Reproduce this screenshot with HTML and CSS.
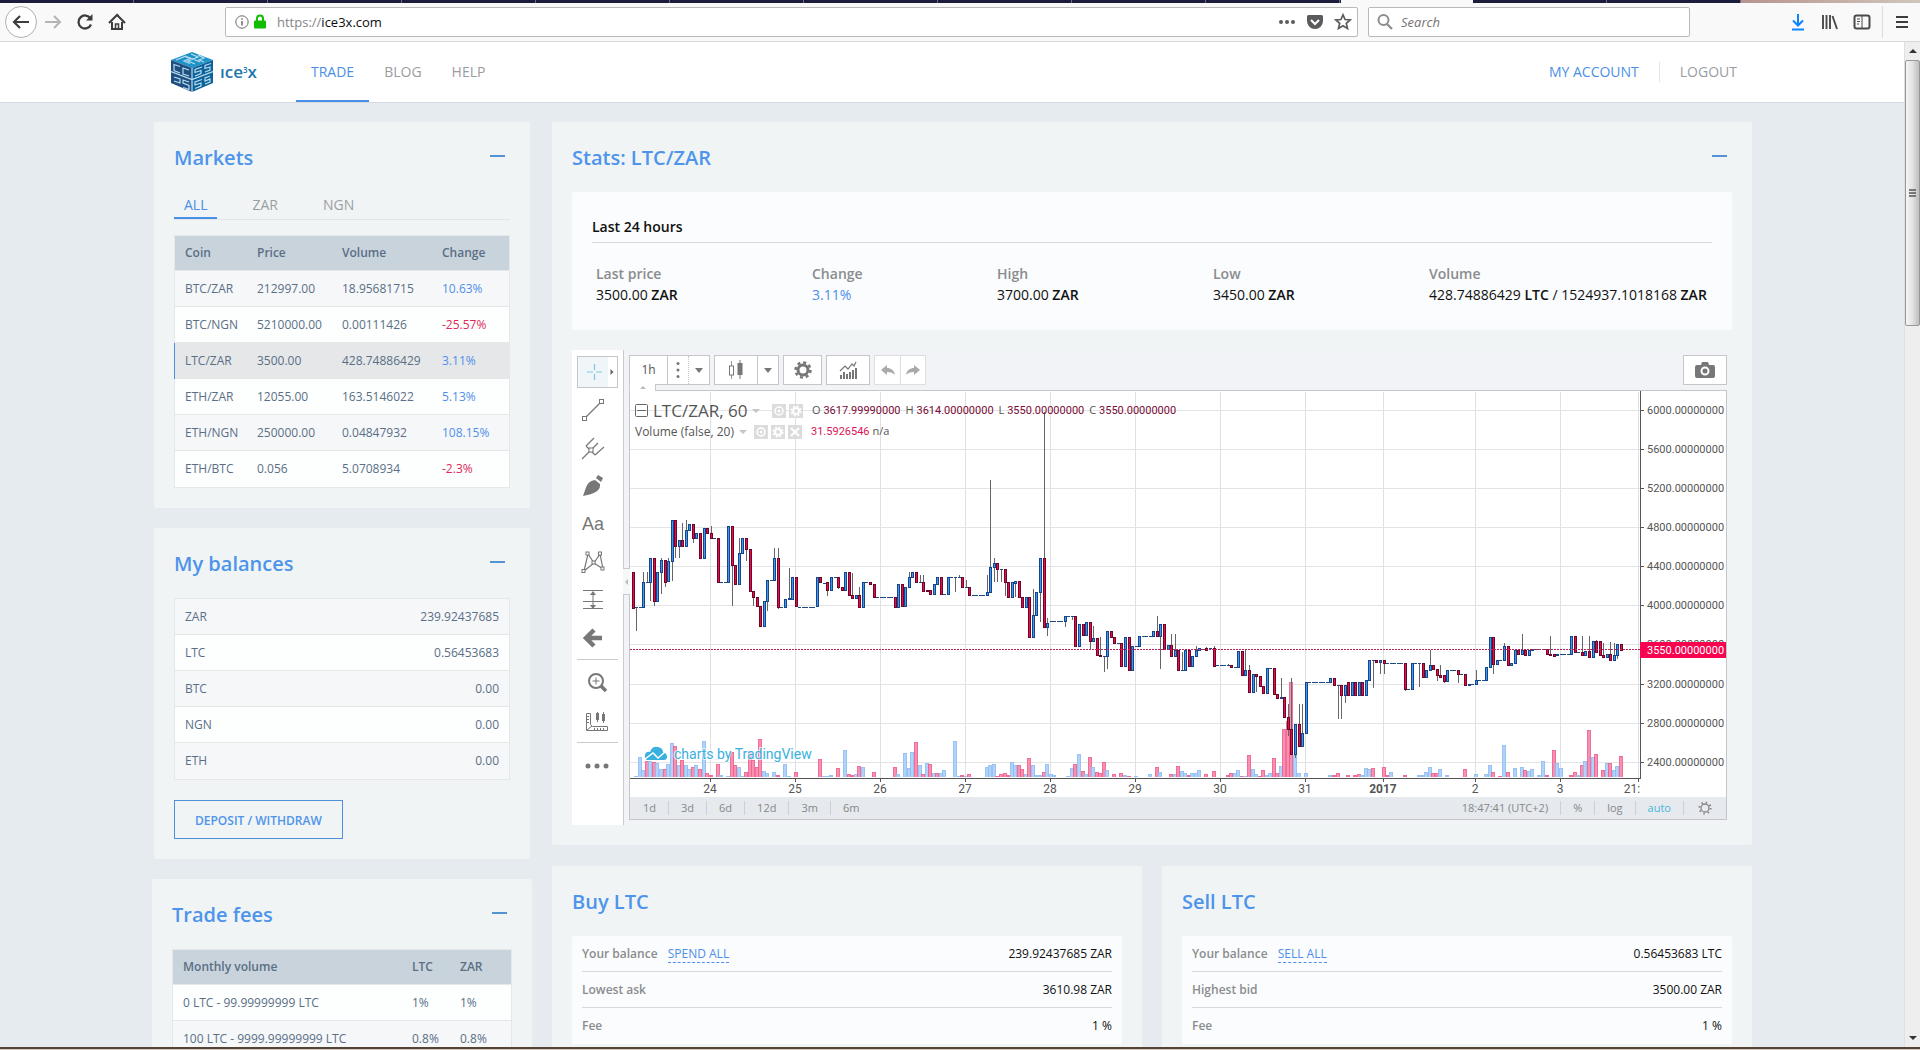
FILE: index.html
```html
<!DOCTYPE html>
<html lang="en">
<head>
<meta charset="utf-8">
<title>ICE3X - LTC/ZAR</title>
<link rel="stylesheet" href="styles.css">
</head>
<body>
<div class="browser-tabs"><span class="tabs-dark"></span><span class="tab-active"></span><span class="tabs-dark tabs-dark-end"></span><span class="tabs-tail"></span></div>

<div class="browser-bar">
  <div class="nav-buttons">
    <button class="icon-btn back" aria-label="Back"><svg width="20" height="20" viewBox="0 0 20 20"><path d="M18 10H3M9 4l-6 6 6 6" fill="none" stroke="#3d3d3f" stroke-width="2.2"/></svg></button>
    <button class="icon-btn" aria-label="Forward"><svg width="20" height="20" viewBox="0 0 20 20"><path d="M2 10h15M11 4l6 6-6 6" fill="none" stroke="#b4b4b6" stroke-width="2"/></svg></button>
    <button class="icon-btn" aria-label="Reload"><svg width="20" height="20" viewBox="0 0 20 20"><path d="M15.500 6.500A6.500 6.500 0 1 0 16 12.500" fill="none" stroke="#3d3d3f" stroke-width="2.300"/><path d="M17.500 2v6.500H11z" fill="#3d3d3f"/></svg></button>
    <button class="icon-btn" aria-label="Home"><svg width="20" height="20" viewBox="0 0 20 20"><path d="M2 11l8-8 8 8M5 10v7h10v-7" fill="none" stroke="#3d3d3f" stroke-width="2"/><path d="M8.500 17v-5h3v5M10 3.500h2" stroke="#3d3d3f" stroke-width="1.500" fill="none"/></svg></button>
  </div>
  <div class="url-box">
    <svg width="14" height="14" viewBox="0 0 14 14"><circle cx="7" cy="7" r="6.200" fill="none" stroke="#6a6a6c"/><path d="M7 6v4.500M7 3.200v1.600" stroke="#6a6a6c" stroke-width="1.500"/></svg>
    <svg class="lock" width="12" height="15" viewBox="0 0 12 15"><path d="M3 7V4.500a3 3 0 0 1 6 0V7" fill="none" stroke="#12bc00" stroke-width="2"/><rect y="6.500" width="12" height="8" rx="1" fill="#12bc00"/></svg>
    <label class="scheme" for="url">https://</label><input id="url" class="url-input" type="text" value="ice3x.com">
    <button class="icon-btn small" aria-label="Page actions"><svg width="16" height="16" viewBox="0 0 16 16" fill="#5b5b5d"><circle cx="2" cy="8" r="2"/><circle cx="8" cy="8" r="2"/><circle cx="14" cy="8" r="2"/></svg></button>
    <button class="icon-btn small" aria-label="Pocket"><svg width="18" height="16" viewBox="0 0 18 16"><path d="M1 2.500A1.500 1.500 0 0 1 2.500 1h13A1.500 1.500 0 0 1 17 2.500V7a8 8 0 0 1-16 0z" fill="#5b5b5d"/><path d="M5 6l4 4 4-4" fill="none" stroke="#fff" stroke-width="2"/></svg></button>
    <button class="icon-btn small" aria-label="Bookmark"><svg width="18" height="18" viewBox="0 0 18 18"><path d="M9 1.800l2.100 4.700 5 .5-3.800 3.400 1.200 5.100L9 12.800l-4.500 2.700 1.200-5.100L1.900 7l5-.5z" fill="none" stroke="#5b5b5d" stroke-width="1.700"/></svg></button>
  </div>
  <div class="search-box">
    <svg width="18" height="18" viewBox="0 0 18 18"><circle cx="7.500" cy="7" r="5" fill="none" stroke="#8c8c8e" stroke-width="2"/><path d="M11 11l5 5" stroke="#8c8c8e" stroke-width="2.200"/></svg>
    <input class="search-input" type="text" placeholder="Search" aria-label="Search">
  </div>
  <div class="tool-buttons">
    <button class="icon-btn" aria-label="Downloads"><svg width="16" height="18" viewBox="0 0 16 18"><path d="M8 1v11M3 7.500l5 5 5-5M2 16.500h12" fill="none" stroke="#0a84ff" stroke-width="2"/></svg></button>
    <button class="icon-btn" aria-label="Library"><svg width="18" height="18" viewBox="0 0 18 18"><path d="M2 2v14M5.500 2v14M9 2v14M11.500 3l4.500 13" stroke="#4a4a4c" stroke-width="1.900" fill="none"/></svg></button>
    <button class="icon-btn" aria-label="Sidebars"><svg width="18" height="18" viewBox="0 0 18 18"><rect x="1.500" y="2.500" width="15" height="13" rx="2" fill="none" stroke="#4a4a4c" stroke-width="2"/><path d="M9 3v12M4 6h3M4 8.500h3M4 11h2" stroke="#4a4a4c"/></svg></button>
    <button class="icon-btn menu" aria-label="Menu"><svg width="14" height="14" viewBox="0 0 14 14"><path d="M1 2h12M1 7h12M1 12h12" stroke="#3d3d3f" stroke-width="2"/></svg></button>
  </div>
</div>

<div class="viewport">
<div class="page">
  <header class="site-header">
    <div class="site-header-inner">
      <a class="logo" href="#">
        <svg width="42" height="40" viewBox="0 0 42 40">
          <path d="M21 0l21 8-21 8L0 8z" fill="#1f93c8"/><path d="M0 8l21 8v24L0 31z" fill="#1f4f80"/><path d="M42 8l-21 8v24l21-9z" fill="#0f6299"/>
          <g fill="none" stroke="#b5dcee" stroke-width="1.200">
            <path d="M5 8l9-3.500 5 2-6 2.500 6 2.500M14 4l8 3-5 2 7 3M20 2l7 3-5 2 7 3M27 3l6 3-5 2 5 2"/>
            <path d="M0 19.500l21 8 21-8M21 16v24"/>
            <path d="M9 14.500l-6-2v6l6 2.500M18 18l-6-2v6l6 2"/>
            <path d="M3 25l6 2v4l-6-2M18 30l-6-2v3l6 2.500v4l-6-2"/>
            <path d="M31 15l-7 2.500v3l6-2v3l-6 2.500M40 11.500l-6 2v3l5-1.500v3l-5 2M39 24l-5 2v3l5-2v3l-5 2M31 27.500l-7 2.500v3l6-2v3l-6 2.500"/>
          </g>
        </svg>
        <span>ıce<sup>3</sup>x</span>
      </a>
      <nav class="main-nav"><a class="active" href="#">TRADE</a><a href="#">BLOG</a><a href="#">HELP</a></nav>
      <nav class="user-nav"><a class="active" href="#">MY ACCOUNT</a><a href="#">LOGOUT</a></nav>
    </div>
  </header>

  <main class="layout">
    <aside class="side">
      <section class="panel">
        <header class="panel-head"><h2>Markets</h2><button class="collapse" aria-label="Collapse markets"></button></header>
        <nav class="tabs"><a class="active" href="#">ALL</a><a href="#">ZAR</a><a href="#">NGN</a></nav>
        <table class="grid markets">
          <colgroup><col class="c-coin"><col class="c-price"><col class="c-volume"><col></colgroup>
          <thead><tr><th>Coin</th><th>Price</th><th>Volume</th><th>Change</th></tr></thead>
          <tbody>
            <tr><td>BTC/ZAR</td><td>212997.00</td><td>18.95681715</td><td class="up">10.63%</td></tr>
            <tr><td>BTC/NGN</td><td>5210000.00</td><td>0.00111426</td><td class="down">-25.57%</td></tr>
            <tr class="selected"><td>LTC/ZAR</td><td>3500.00</td><td>428.74886429</td><td class="up">3.11%</td></tr>
            <tr><td>ETH/ZAR</td><td>12055.00</td><td>163.5146022</td><td class="up">5.13%</td></tr>
            <tr><td>ETH/NGN</td><td>250000.00</td><td>0.04847932</td><td class="up">108.15%</td></tr>
            <tr><td>ETH/BTC</td><td>0.056</td><td>5.0708934</td><td class="down">-2.3%</td></tr>
          </tbody>
        </table>
      </section>

      <section class="panel">
        <header class="panel-head"><h2>My balances</h2><button class="collapse" aria-label="Collapse balances"></button></header>
        <table class="grid balances">
          <tbody>
            <tr><td>ZAR</td><td class="num">239.92437685</td></tr>
            <tr><td>LTC</td><td class="num">0.56453683</td></tr>
            <tr><td>BTC</td><td class="num">0.00</td></tr>
            <tr><td>NGN</td><td class="num">0.00</td></tr>
            <tr><td>ETH</td><td class="num">0.00</td></tr>
          </tbody>
        </table>
        <button class="outline-btn">DEPOSIT / WITHDRAW</button>
      </section>

      <section class="panel panel-wide">
        <header class="panel-head"><h2>Trade fees</h2><button class="collapse" aria-label="Collapse fees"></button></header>
        <table class="grid fees">
          <colgroup><col><col class="c-fee"><col class="c-fee-last"></colgroup>
          <thead><tr><th>Monthly volume</th><th>LTC</th><th>ZAR</th></tr></thead>
          <tbody>
            <tr><td>0 LTC - 99.99999999 LTC</td><td>1%</td><td>1%</td></tr>
            <tr><td>100 LTC - 9999.99999999 LTC</td><td>0.8%</td><td>0.8%</td></tr>
          </tbody>
        </table>
      </section>
    </aside>

    <div class="content">
      <section class="panel stats">
        <header class="panel-head"><h2>Stats: LTC/ZAR</h2><button class="collapse" aria-label="Collapse stats"></button></header>
        <div class="last24">
          <h3>Last 24 hours</h3>
          <dl>
            <div><dt>Last price</dt><dd>3500.00 <b>ZAR</b></dd></div>
            <div><dt>Change</dt><dd class="up">3.11%</dd></div>
            <div><dt>High</dt><dd>3700.00 <b>ZAR</b></dd></div>
            <div><dt>Low</dt><dd>3450.00 <b>ZAR</b></dd></div>
            <div><dt>Volume</dt><dd>428.74886429 <b>LTC</b> / 1524937.1018168 <b>ZAR</b></dd></div>
          </dl>
        </div>

        <div class="widget">
          <div class="draw-tools">
            <button class="cross" aria-label="Cross"><svg width="38" height="30" viewBox="0 0 38 30"><path d="M8 15h6M17 15h6M15.500 7v6M15.500 17v6" stroke="#7cc7de" stroke-width="1.200"/><path d="M31.500 12l3 3-3 3z" fill="#666"/></svg></button>
            <button aria-label="Trend line"><svg width="24" height="24" viewBox="0 0 24 24"><path d="M4 20L20 4" stroke="#777" stroke-width="1.200"/><g fill="#fff" stroke="#777"><rect x="1.500" y="18.500" width="4" height="4"/><rect x="18.500" y="1.500" width="4" height="4"/></g></svg></button>
            <button aria-label="Pitchfork"><svg width="24" height="24" viewBox="0 0 24 24"><path d="M1 23L17 7M5 10l9 9M5 10l8-8M14 19l9-8" fill="none" stroke="#777" stroke-width="1.200"/><rect x="8" y="12" width="4" height="4" fill="#fff" stroke="#777"/></svg></button>
            <button aria-label="Brush"><svg width="24" height="24" viewBox="0 0 24 24" fill="#777"><path d="M2 22C5 15 5 7 14 6l5 4c1 8-8 10-17 12z"/><path d="M15 4l2-3 5 3-2 4z"/></svg></button>
            <button class="text-tool" aria-label="Text">Aa</button>
            <button aria-label="Pattern"><svg width="24" height="24" viewBox="0 0 24 24"><path d="M3 21L7 4l6 9 6-9 3 15-9-6-10 8" fill="none" stroke="#777" stroke-width="1.200"/><g fill="#fff" stroke="#777"><rect x="1" y="19.500" width="3" height="3"/><rect x="5" y="2" width="3" height="3"/><rect x="11" y="11" width="3" height="3"/><rect x="17.500" y="2" width="3" height="3"/><rect x="20" y="17" width="3" height="3"/></g></svg></button>
            <button aria-label="Measure"><svg width="24" height="24" viewBox="0 0 24 24"><path d="M2 2.500h20M2 13.500h20M2 20.500h20M12 5v14" stroke="#777"/><path d="M12 3l3 4H9zM12 21l3-4H9z" fill="#777"/></svg></button>
            <button aria-label="Arrow"><svg width="24" height="24" viewBox="0 0 24 24"><path d="M21 12H7M13 4l-8 8 8 8" fill="none" stroke="#777" stroke-width="4.500"/></svg></button>
            <hr>
            <button class="low" aria-label="Zoom in"><svg width="24" height="24" viewBox="0 0 24 24"><circle cx="11" cy="10" r="7" fill="none" stroke="#777" stroke-width="2"/><path d="M7.500 10h7M11 6.500v7" stroke="#777"/><path d="M16 15l5 5" stroke="#777" stroke-width="3.500"/></svg></button>
            <button class="low" aria-label="Magnet"><svg width="24" height="20" viewBox="0 0 24 20"><path d="M1.500 2.500h4v11l2 2h15v4h-21zM2 5.500h2M2 8.500h2M2 11.500h2M9.500 19v-2M12.500 19v-2M15.500 19v-2M18.500 19v-2M2 19l5-4" fill="none" stroke="#777"/><path d="M12.500 1v10M18.500 1v11" stroke="#777"/><path d="M11 2h3v7h-3zM17 3h3v7h-3z" fill="#777"/></svg></button>
            <hr>
            <button class="low" aria-label="More"><svg width="26" height="8" viewBox="0 0 26 8" fill="#777"><circle cx="4" cy="4" r="2.500"/><circle cx="13" cy="4" r="2.500"/><circle cx="22" cy="4" r="2.500"/></svg></button>
          </div>

          <div class="chart-col">
            <div class="chart-toolbar">
              <div class="btn-group"><button class="w37">1h</button><button class="w21" aria-label="More intervals"><svg width="4" height="18" viewBox="0 0 4 18" fill="#777"><circle cx="2" cy="2.500" r="1.500"/><circle cx="2" cy="9" r="1.500"/><circle cx="2" cy="15.500" r="1.500"/></svg></button><button class="w21 dotted" aria-label="Interval list"><svg width="8" height="5" viewBox="0 0 8 5"><path d="M0 0h8L4 5z" fill="#777"/></svg></button></div>
              <div class="btn-group"><button class="w42" aria-label="Chart type"><svg width="16" height="20" viewBox="0 0 16 20"><path d="M3.500 1v18" stroke="#999"/><rect x="1.500" y="6" width="4" height="9" fill="#fff" stroke="#777"/><path d="M12 0v19" stroke="#777"/><rect x="9.500" y="3" width="5" height="12" fill="#777"/></svg></button><button class="w21" aria-label="Chart type list"><svg width="8" height="5" viewBox="0 0 8 5"><path d="M0 0h8L4 5z" fill="#777"/></svg></button></div>
              <div class="btn-group"><button class="w37" aria-label="Settings"><svg width="18" height="18" viewBox="0 0 18 18"><circle cx="9" cy="9" r="5" fill="none" stroke="#777" stroke-width="3"/><circle cx="9" cy="9" r="7.500" fill="none" stroke="#777" stroke-width="2.500" stroke-dasharray="3 2.890"/></svg></button></div>
              <div class="btn-group"><button class="w42" aria-label="Indicators"><svg width="18" height="18" viewBox="0 0 18 18"><path d="M1 10l5-5 3 3 4-5 2 2 2-4" fill="none" stroke="#777" stroke-width="1.200"/><path d="M2 18v-4M5 18v-7M8 18v-5M11 18v-7M14 18V9M17 18V7" stroke="#777" stroke-width="2"/></svg></button></div>
              <div class="btn-group faded"><button class="w25" aria-label="Undo"><svg width="14" height="11" viewBox="0 0 14 11"><path d="M0 5l6-5v3c4 0 7 2 8 7-2-2-4-3-8-3v3z" fill="#aaa"/></svg></button><button class="w25" aria-label="Redo"><svg width="14" height="11" viewBox="0 0 14 11"><path d="M14 5L8 0v3c-4 0-7 2-8 7 2-2 4-3 8-3v3z" fill="#aaa"/></svg></button></div>
              <div class="btn-group end"><button class="w42" aria-label="Snapshot"><svg width="20" height="17" viewBox="0 0 20 17"><path d="M2 3h4l1-3h6l1 3h4q2 0 2 2v9q0 2-2 2H2q-2 0-2-2V5q0-2 2-2z" fill="#777"/><circle cx="10" cy="9" r="3.500" fill="none" stroke="#fff" stroke-width="2"/></svg></button></div>
            </div>
            <div class="chart-frame">
              <svg id="chart" class="chart" viewBox="0 0 1096 406" role="img" aria-label="LTC/ZAR hourly candles"></svg>
              <div class="legend">
                <div class="legend-row">
                  <span class="legend-name big"><svg width="13" height="13" viewBox="0 0 13 13"><rect x=".500" y=".500" width="12" height="12" rx="1" fill="none" stroke="#666"/><path d="M2 6.500h9" stroke="#666"/></svg>LTC/ZAR, 60<i class="caret"></i></span>
                  <button class="chip" aria-label="Hide series"><svg width="14" height="14" viewBox="0 0 14 14"><circle cx="7" cy="7" r="4" fill="none" stroke="#fff" stroke-width="1.500"/><circle cx="7" cy="7" r="1.500" fill="#fff"/></svg></button>
                  <button class="chip" aria-label="Format series"><svg width="14" height="14" viewBox="0 0 14 14"><circle cx="7" cy="7" r="3" fill="none" stroke="#fff" stroke-width="2"/><circle cx="7" cy="7" r="4.800" fill="none" stroke="#fff" stroke-width="1.500" stroke-dasharray="2 1.770"/></svg></button>
                  <span class="ohlc">O <b>3617.99990000</b></span><span class="ohlc">H <b>3614.00000000</b></span><span class="ohlc">L <b>3550.00000000</b></span><span class="ohlc">C <b>3550.00000000</b></span>
                </div>
                <div class="legend-row">
                  <span class="legend-name">Volume (false, 20)<i class="caret"></i></span>
                  <button class="chip" aria-label="Hide volume"><svg width="14" height="14" viewBox="0 0 14 14"><circle cx="7" cy="7" r="4" fill="none" stroke="#fff" stroke-width="1.500"/><circle cx="7" cy="7" r="1.500" fill="#fff"/></svg></button>
                  <button class="chip" aria-label="Format volume"><svg width="14" height="14" viewBox="0 0 14 14"><circle cx="7" cy="7" r="3" fill="none" stroke="#fff" stroke-width="2"/><circle cx="7" cy="7" r="4.800" fill="none" stroke="#fff" stroke-width="1.500" stroke-dasharray="2 1.770"/></svg></button>
                  <button class="chip" aria-label="Remove volume"><svg width="14" height="14" viewBox="0 0 14 14"><path d="M3 3l8 8M11 3l-8 8" stroke="#fff" stroke-width="2"/></svg></button>
                  <span class="ohlc"><em>31.5926546</em> n/a</span>
                </div>
              </div>
              <button class="pull-tab pull-top" aria-label="Hide toolbar"><svg width="6" height="3" viewBox="0 0 6 3"><path d="M0 3h6L3 0z" fill="#bbb"/></svg></button>
              <button class="pull-tab pull-left" aria-label="Hide drawing tools"><svg width="3" height="6" viewBox="0 0 3 6"><path d="M3 0v6L0 3z" fill="#bbb"/></svg></button>
              <div class="range-bar">
                <button>1d</button><button>3d</button><button>6d</button><button>12d</button><button>3m</button><button>6m</button>
                <span class="clock">18:47:41 (UTC+2)</span><button>%</button><button>log</button><button class="on">auto</button><button class="scale" aria-label="Scale settings"><svg width="14" height="14" viewBox="0 0 14 14"><circle cx="7" cy="7" r="4" fill="none" stroke="#888" stroke-width="1.300"/><circle cx="7" cy="7" r="5.600" fill="none" stroke="#888" stroke-width="2" stroke-dasharray="1.500 2.900"/></svg></button>
              </div>
            </div>
          </div>
        </div>
      </section>

      <div class="orders">
        <section class="panel">
          <header class="panel-head"><h2>Buy LTC</h2></header>
          <dl class="order-box">
            <div><dt>Your balance <a href="#">SPEND ALL</a></dt><dd>239.92437685 ZAR</dd></div>
            <div><dt>Lowest ask</dt><dd>3610.98 ZAR</dd></div>
            <div><dt>Fee</dt><dd>1 %</dd></div>
          </dl>
        </section>
        <section class="panel">
          <header class="panel-head"><h2>Sell LTC</h2></header>
          <dl class="order-box">
            <div><dt>Your balance <a href="#">SELL ALL</a></dt><dd>0.56453683 LTC</dd></div>
            <div><dt>Highest bid</dt><dd>3500.00 ZAR</dd></div>
            <div><dt>Fee</dt><dd>1 %</dd></div>
          </dl>
        </section>
      </div>
    </div>
  </main>
</div>
<div class="scrollbar">
  <svg width="8" height="4" viewBox="0 0 8 4"><path d="M0 4h8L4 0z" fill="#333"/></svg>
  <div class="track"><div class="thumb"><svg width="7" height="8" viewBox="0 0 7 8"><path d="M0 1h7M0 4h7M0 7h7" stroke="#555" stroke-width="1.500"/></svg></div></div>
  <svg width="8" height="4" viewBox="0 0 8 4"><path d="M0 0h8L4 4z" fill="#333"/></svg>
</div>
</div>
<div class="taskbar-edge"></div>
<script src="chart.js"></script>
</body>
</html>
```
FILE: styles.css
```css
* { box-sizing: border-box; }
body {
  margin: 0;
  height: 100vh;
  display: flex;
  flex-direction: column;
  overflow: hidden;
  background: #e6ebef;
  color: #5a6f86;
  font: 12px/20px "Open Sans", "Noto Sans", sans-serif;
}
button, input { font: inherit; color: inherit; margin: 0; padding: 0; border: 0; background: none; }
button { display: inline-flex; align-items: center; justify-content: center; cursor: pointer; }
svg { display: block; flex: none; }
a { color: inherit; text-decoration: none; }
h2, h3, dl, dd { margin: 0; }

/* browser chrome */
.browser-tabs { display: flex; flex: none; height: 3px; background: #f9f9fa; }
.tabs-dark { flex: 1341; background: repeating-linear-gradient(90deg, #1c1d3c 0 133px, #6b6c80 133px 134px); }
.tab-active { flex: 132; }
.tabs-dark-end { flex: 268; }
.tabs-tail { flex: 179; background: linear-gradient(90deg, #b8948e, #cfc6bc); }
.browser-bar {
  display: flex; flex: none; align-items: center; height: 39px;
  background: #f9f9fa; border-bottom: 1px solid #d9d9db;
}
.icon-btn { width: 32px; height: 32px; }
.icon-btn.small { width: 28px; height: 26px; }
.icon-btn.back { border: 1px solid #b1b1b3; border-radius: 50%; background: #fff; }
.nav-buttons { display: flex; padding-left: 5px; width: 225px; }
.url-box, .search-box {
  display: flex; align-items: center; height: 30px; background: #fff;
  border: 1px solid #b9b9bb; border-radius: 2px; font-size: 13px;
}
.url-box { flex: 1122; padding-left: 9px; }
.lock { margin: 0 11px 2px 5px; }
.scheme { color: #848488; }
.url-input { flex: 1; min-width: 0; color: #0c0c0d; outline: none; }
.search-box { flex: 313; margin-left: 10px; padding-left: 7px; gap: 7px; }
.search-input { flex: 1; min-width: 0; outline: none; }
.search-input::placeholder { color: #737373; opacity: 1; font-style: italic; }
.tool-buttons { display: flex; justify-content: flex-end; width: 230px; }
.icon-btn.menu { width: 38px; border-left: 1px solid #dcdcde; margin-left: 4px; }

.viewport { display: flex; flex: 1; min-height: 0; }
.page { flex: 1; min-width: 0; overflow: hidden; }
.scrollbar {
  width: 16px; display: flex; flex-direction: column; align-items: center;
  padding: 7px 0; gap: 7px; background: #eeeeef; border-left: 1px solid #e0e0e2;
}
.track { flex: 1; align-self: stretch; }
.thumb {
  height: 27.5%; display: flex; align-items: center; justify-content: center;
  border: 1px solid #979797; border-radius: 2px;
  background: linear-gradient(90deg, #f6f6f6, #e2e2e3 50%, #bdbdc0);
}
.taskbar-edge { flex: none; height: 3px; border-top: 2px solid #554336; background: #d3c6bb; }

/* site header */
.site-header { background: #fff; border-bottom: 1px solid #d6dce1; height: 61px; }
.site-header-inner { display: flex; max-width: 1600px; margin: 0 auto; height: 60px; padding-left: 19px; }
.logo { display: flex; align-items: center; gap: 7px; width: 125px; color: #1c76ae; font-size: 17px; font-weight: 600; }
.logo sup { font-size: 8px; line-height: 8px; vertical-align: 5px; }
.main-nav, .user-nav { display: flex; font-size: 14px; color: #9a9c9f; }
.main-nav a { padding: 20px 15px 18px; border-bottom: 2px solid transparent; }
.main-nav a.active { color: #4a8fe7; border-color: #4a8fe7; }
.user-nav { margin-left: auto; align-items: center; padding-right: 15px; }
.user-nav a.active { color: #4a8fe7; padding-right: 20px; margin-right: 20px; border-right: 1px solid #e3e6e8; }

/* panels */
.layout {
  display: grid; grid-template-columns: 380px minmax(0, 1fr); gap: 20px;
  max-width: 1600px; margin: 0 auto; padding-top: 19px;
}
.side, .content { display: flex; flex-direction: column; gap: 20px; }
.content { gap: 21px; }
.side .panel { margin: 0 2px; }
.side .panel-wide { margin: 0; }
.panel { background: #f0f4f5; border-radius: 2px; padding: 20px; }
.panel-head { display: flex; justify-content: space-between; margin-bottom: 18px; }
.panel-head h2 { color: #4d94ea; font-size: 20px; line-height: 32px; font-weight: 600; }
.collapse { width: 15px; height: 2px; margin: 13px 5px 0 0; background: #5592d3; }

.tabs { display: flex; gap: 25px; margin: 21px 0 15px; border-bottom: 1px solid #e3e6e9; font-size: 14px; color: #9c9fa2; }
.tabs a { padding: 0 10px 2px; border-bottom: 2px solid transparent; }
.tabs a.active { color: #4a8fe7; border-color: #4a8fe7; }

.grid { width: 100%; table-layout: fixed; border-collapse: separate; border-spacing: 0; border: 1px solid #e5e8eb; }
.grid th, .grid td { height: 36px; padding: 0 10px; text-align: left; font-weight: 400; border-bottom: 1px solid #e5e8eb; background: #fdfefe; }
.grid th { height: 35px; background: #c9d3dc; font-weight: 600; }
.grid tbody tr:nth-child(odd) td { background: #f6f7f9; }
.grid tr:last-child td { border-bottom: 0; }
.markets tbody tr.selected td { background: #e5e7e9; }
.markets tr.selected td:first-child { box-shadow: -1px 0 0 #4a8fe7; }
.fees tbody tr:nth-child(odd) td { background: #fdfefe; }
.fees tbody tr:nth-child(even) td { background: #f6f7f9; }
.grid .num { text-align: right; }
.c-coin { width: 72px; }
.c-price { width: 85px; }
.c-volume { width: 100px; }
.c-fee { width: 48px; }
.c-fee-last { width: 61px; }
.grid .up, .up { color: #4f8fea; }
.grid .down { color: #e0295a; }
.outline-btn {
  height: 39px; margin-top: 20px; padding: 3px 20px 0;
  border: 1px solid #4f8fdc; color: #4f93ea; font-weight: 600;
}

/* last 24 hours */
.last24 { background: #fafcfd; border-radius: 3px; padding: 25px 20px 25px; color: #111; font-size: 14px; }
.last24 h3 { font-size: 14px; font-weight: 600; padding-bottom: 5px; border-bottom: 1px solid #d6dadf; }
.last24 dl { display: grid; grid-template-columns: 216fr 185fr 216fr 216fr 287fr; margin-top: 20px; line-height: 21px; }
.last24 dl > div { padding-left: 4px; white-space: nowrap; }
.last24 dt { color: #8a8c8e; font-weight: 600; }
.last24 b { font-weight: 600; }
.last24 .up { color: #4f8fea; }

/* trading chart */
.widget { display: flex; margin-top: 20px; padding-right: 5px; background: #f1f3f6; }
.draw-tools { display: flex; flex-direction: column; width: 52px; padding: 6px 5px; background: #fff; border-right: 1px solid #c9cbcd; }
.draw-tools button { height: 38px; padding-right: 9px; }
.draw-tools .low { padding-right: 2px; }
.draw-tools .cross { height: 32px; padding: 0; margin-bottom: 3px; border: 1px solid #c4c6c8; background: linear-gradient(90deg, #f0f5f9 30px, #fff 30px); }
.draw-tools .text-tool { font: 18px/20px "Liberation Sans", Arial, sans-serif; color: #777; }
.draw-tools hr { width: 100%; height: 1px; margin: 2px 0 4px; border: 0; background: #c9cbcd; }
.chart-col { flex: 1; min-width: 0; padding: 5px 0 5px 5px; }
.chart-toolbar { display: flex; gap: 4px; height: 30px; margin-bottom: 5px; }
.btn-group { display: flex; border: 1px solid #c4c6c8; background: #fff; color: #555; }
.btn-group button + button { border-left: 1px solid #c4c6c8; }
.btn-group button.dotted { border-left-style: dotted; }
.btn-group.faded, .btn-group.faded button + button { border-color: #dcdee0; }
.btn-group.end { margin-left: auto; }
.w21 { width: 21px; }
.w25 { width: 25px; }
.w37 { width: 37px; }
.w42 { width: 42px; }
.chart-frame { position: relative; border: 1px solid #c4c6ca; background: #fff; }
.chart { width: 100%; height: auto; font-family: Roboto, "Liberation Sans", sans-serif; }
.legend { position: absolute; left: 5px; top: 9px; color: #555; font-size: 12px; }
.legend-row { display: flex; align-items: center; gap: 3px; height: 21px; white-space: nowrap; }
.legend-name { display: flex; align-items: center; gap: 5px; width: 116px; }
.legend-name.big { width: 134px; font-size: 17px; font-weight: 500; }
.caret { border: 4px solid transparent; border-top-color: #c4c6c8; border-bottom: 0; }
.chip { width: 14px; height: 14px; background: #dcdcdc; }
.ohlc { margin-left: 2px; font-size: 11px; }
.chip + .ohlc { margin-left: 6px; }
.ohlc b, .ohlc em { font-family: Roboto, sans-serif; font-weight: 400; font-style: normal; color: #7a0a35; }
.ohlc em { color: #dd1456; }
.pull-tab { position: absolute; border: 1px solid #c9cbcd; background: #fff; }
.pull-top { left: -1px; top: -7px; width: 27px; height: 7px; border-width: 0 1px; }
.pull-left { left: -7px; top: 177px; width: 7px; height: 27px; border-width: 1px 0; background: #f6f7f9; }
.range-bar { display: flex; align-items: center; height: 22px; padding-left: 1px; background: #e6e9ed; color: #85888b; font-size: 11px; line-height: 14px; }
.range-bar button { padding: 0 12px; height: 14px; border-left: 1px solid #cdd0d4; }
.range-bar button:first-child { border-left: 0; }
.range-bar .scale { padding: 0 14px; }
.range-bar .on { color: #4bb5dc; }
.clock { margin: 0 12px 0 auto; }

/* buy and sell */
.orders { display: grid; grid-template-columns: 1fr 1fr; gap: 20px; }
.orders .panel { padding-bottom: 60px; }
.order-box { background: #fafcfd; border-radius: 2px; padding: 0 10px; }
.order-box div { display: flex; justify-content: space-between; align-items: center; height: 36px; border-bottom: 1px solid #d6dadf; }
.order-box div:last-child { border-bottom: 0; }
.order-box dt { color: #8a8c8e; font-weight: 600; }
.order-box dt a { margin-left: 7px; color: #4f8fea; font-weight: 400; border-bottom: 1px dashed #4f8fea; }
.order-box dd { color: #111; }
```
FILE: chart.js
```js
// Hourly candles, oldest first. Levels are thirds of a pixel on the price pane.
// r/b = falling/rising body "top/bottom", d = flat bar, ^ = high, _ = low, * = repeat.
const CANDLES = `r577/683 d680_753 d680 b606/680^577 d607^577 b535/606_662 r535/664_678 b577/664 b541/577^535_641
r541/605_620 b544/604^535 b421/544_602 r421/499_535 b481/499_535 r481/499^430 b451/499^421 b433/451 r433/475_488
b460/475 r460/535 b445/535 r445/460 r460/475^438 d475 r475/607 d607*2 b439/607 r439/556_677 r556/611 b520/611^475
b475/520 r475/506_543 r506/634 r634/652_677 r652/679 r679/737 b664/737 b601/664_692 d601 b535/601^505
r535/680^505_686 d680 b658/680 b655/658^565 b592/656 r592/679 d680*5 b592/679 r592/607 d608 r607/631_647 b592/631
d592 r592/622_628 r622/631 b577/631 r577/646 r646/653^580 b646/653 r646/680^622 b607/680 d607 r607/611 r611/652
d652*5 r652/680 b611/680 r611/677 b622/677 b592/622^577 b577/592 r577/607 d607^586 r607/632^586 r631/633 r630/643
b613/643 b592/613 r592/643 d643 b592/643 d592 d592_635 d592^586 r592/622 d622^600 r622/646 d646*4 b637/646^586
b562/637^300 b550/562^535_605 r550/566_605 d566_605 r566/607_649 r607/650 b607/650 b604/608_650 r604/650 r650/680
b652/680 r652/770 b706/770^628 b637/706 b535/637_725 r535/740^95 b728/740^713_768 d724*4 b709/724_740 d709
d709_720 r709/797 b733/797 r733/765 b727/765 r727/784_808 b775/784^737 r775/824 r824/827^770 d827_875
b754/827_868 r754/770 r770/790 d790 r790/857 b770/857 r770/869 b797/869 d797 b769/797 d769*3 b754/769
r754/769^709 b733/769_866 r733/806 b796/806 r796/827^763 b811/827^763 r811/871 d871^815 b811/871 r811/857
b827/857 b809/827^797 b805/811 d806 r805/811^802 d805 r805/857^797 d856*3 d856^852 r856/860 d860 b814/860
r814/886 b871/886^811 r871/937^856 b883/937 r883/887_937 r889/917 r917/940 b865/940 d865 r865/943 r943/955
b952/955^895 r952/1012 r1012/1046^972_1067 r1046/1121^895 b1033/1121_1133 r1033/1097^972 b1060/1097^972 b907/1060
d907*6 b895/907 r895/916 d916_1016 r916/944_1016 b916/944_970 r907/944 b907/944 r907/944 b907/944 r907/944
b901/944 b841/901 d841_925 r841/845 b841/845_883 r841/850_883 d850*5 r850/928_934 d928 b850/928 d850 d850_922
r850/892 b871/892 b856/871^811 r856/868 r868/886_904 r886/892^856 r886/904_910 b871/904 d871*2 r871/883_910 d883
r883/916 b913/916 d913 b901/913^871 d901*2 b862/901 b772/862 r772/853_883 b841/853 d841 b799/841^790 r799/856
b850/856 b811/850 r811/823 b811/823^763 r811/826 b811/826 b808/811 d808*3 r808/823 r822/824^769 r823/827 b823/826
d823*3 b769/823 r769/817 d817 r817/826^769 b814/826 r814/832^769 b784/832 r784/817^781 r784/826 r826/832^790
b823/832 r823/841^787 b826/841^790 b793/826_838 r793/811`;

// Volume bars: hour index, direction, height in thirds of a pixel.
const VOLUMES = `1b3 2b61 3b20 4r48 5b48 6r44 7b41 8b23 9r23 10b38 11b101 12r92 13b35 14r51 15b35 16b23 17r31 18b35
19r23 20b107 21r11 22r5 24r38 25b7 27b3 28r74 29r35 30b29 31b3 32r14 33r79 34r51 35r29 36r113 37b17 38b11 40b14
41r7 43b38 44b3 46r14 53r53 54b4 55b4 56b5 58r26 60b80 61r8 62r5 63b8 64r32 65b29 68r14 74r29 75b8 77b71 78b26
79b74 80r104 81b35 82r8 83b41 84r38 85b11 86r11 87b13 88b20 91b107 92b3 93r5 94b3 95r8 100b29 101b35 102b38 103r3
104r8 105r11 106r5 107b44 108b35 109r35 110r23 111b8 112r56 113b35 114b5 115b7 116r14 117b38 118b8 119b7 123b3
124b26 125r38 126b68 127r17 128b8 129r59 130b29 131r14 132r11 133r44 134b20 136r8 138r11 139b5 140r4 142b3 146b8
148r29 149b14 152r8 153b8 154r32 155b17 156b11 157r7 158b11 159b13 160b20 162r10 164r17 168r5 169r11 170b11
171b20 172r4 173b4 174r65 175b23 176b8 177r4 178r20 179b5 180b11 181r56 182r11 183b32 184r143 185r167 186r284
187b65 188b11 190b11 197b5 198r5 199r11 202r5 204r5 205r8 206b7 207b26 208b23 209r26 212r29 213r5 214b14 218r5
222b5 223b5 224b14 225b29 226r11 227r11 228b23 230b5 235r23 238b8 241b8 242b35 243r14 245r4 246b95 247r14 249b26
251b29 252r20 253b17 254b23 256b5 257b47 258r5 260r80 261b41 262b26 265r5 266r14 267b5 268r35 269b47 270r140
271b61 272r68 274r20 275b41 276r41 277b20 278b32 279r62`;

const svg = document.getElementById('chart');
const add = (tag, attrs, text) => {
  const el = document.createElementNS('http://www.w3.org/2000/svg', tag);
  for (const k in attrs) el.setAttribute(k, attrs[k]);
  if (text) el.textContent = text;
  svg.appendChild(el);
};
const rect = (x, y, w, h, fill, extra) => add('rect', { x, y, width: w, height: h, fill, ...extra });
const barX = i => Math.round(2.67 + i * 3.542);
const level = v => Math.round(v / 3) - 11;
const BASE = 387;

const days = [[80, '24'], [165, '25'], [250, '26'], [335, '27'], [420, '28'], [505, '29'], [590, '30'], [675, '31'], [753, '2017'], [845, '2'], [930, '3'], [1008, '21:']];
const prices = [19, 58, 97, 136, 175, 214, 253, 293, 332, 371];
days.forEach(([x]) => rect(x, 1, 1, BASE - 1, '#e1e1e3'));
prices.forEach(y => rect(0, y, 1010, 1, '#e4e4e6'));

for (const t of VOLUMES.split(/\s+/)) {
  const [, i, kind, h] = t.match(/(\d+)([rb])(\d+)/);
  const height = Math.max(Math.round(h / 3), 1), x = barX(+i) - 1;
  const up = kind === 'b';
  rect(x - 1, BASE - 1 - height, 4, height, up ? '#8fbcf2' : '#ee5f8e', { opacity: 0.9 });
  if (height > 2) rect(x, BASE - height, 2, height - 1, up ? '#b3d5fc' : '#fa93b5', { opacity: 0.9 });
}

let hour = 0;
for (const t of CANDLES.split(/\s+/)) {
  const [, kind, top, bottom, high, low, times] = t.match(/([rbd])(\d+)(?:\/(\d+))?(?:\^(\d+))?(?:_(\d+))?(?:\*(\d+))?/);
  for (let n = 0; n < (times || 1); n++, hour++) {
    const x = barX(hour), y1 = level(top), y2 = level(bottom || top);
    const hi = high ? level(high) : y1, lo = low ? level(low) : y2;
    if (lo > hi) rect(x, hi, 1, lo - hi, '#66666a');
    if (kind === 'd') rect(x - 1, y1, 3, 1, '#1d4a80');
    else {
      const up = kind === 'b';
      rect(x - 1, y1, 3, Math.max(y2 - y1, 1) + 1, up ? '#14468c' : '#700528');
      if (y2 - y1 > 1) rect(x, y1 + 1, 1, y2 - y1 - 1, up ? '#3f97f0' : '#e30c4c');
    }
  }
}

add('path', { d: 'M0 258.5H1010', stroke: '#b8225a', 'stroke-dasharray': '2 1' });
add('path', { d: 'M17 369q-3-1-2-5 1-4 5-3 2-6 8-5 5 1 5 5 4 1 4 5 0 3-3 3z', fill: '#3ab0df' });
add('path', { d: 'M15 368l8-6 5 5 7-6', fill: 'none', stroke: '#fff', 'stroke-width': 1.5 });
add('text', { x: 44, y: 368, 'font-size': 14, fill: '#3ab0df', stroke: '#fff', 'stroke-width': 2, 'stroke-opacity': 0.7, 'paint-order': 'stroke' }, 'charts by TradingView');

rect(0, BASE, 1011, 1, '#555');
rect(1010, 0, 1, BASE, '#555');
days.forEach(([x, label]) => {
  rect(x, BASE, 1, 4, '#555');
  add('text', { x: label === '21:' ? x - 6 : x, y: 402, 'font-size': 12, 'text-anchor': 'middle', fill: '#555', 'font-weight': label === '2017' ? 700 : 400 }, label);
});
prices.forEach((y, i) => {
  rect(1011, y, 3, 1, '#555');
  add('text', { x: 1017, y: y + 4, 'font-size': 11, fill: '#555' }, (6000 - i * 400) + '.00000000');
});
rect(1010, 251, 86, 16, '#f7034f');
add('text', { x: 1017, y: 263, 'font-size': 11, fill: '#fff' }, '3550.00000000');
```
